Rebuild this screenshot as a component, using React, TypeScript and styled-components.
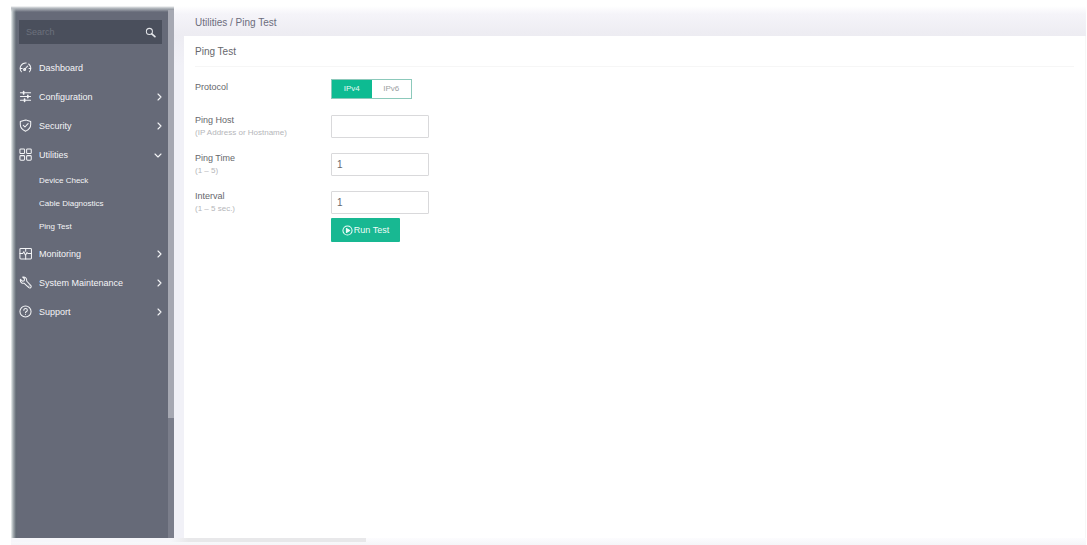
import React, { useState } from "react";
import styled, { createGlobalStyle } from "styled-components";

const GlobalStyle = createGlobalStyle`
  * { box-sizing: border-box; }
  body { margin: 0; background: #fff; font-family: "Liberation Sans", Arial, sans-serif; font-size: 10px; line-height: 14px; color: #66676c; }
  button, input { font: inherit; color: inherit; }
`;

const Page = styled.div`
  min-height: 100vh;
  display: flex;
  flex-direction: column;
  padding: 6px 1px 0 11px;
`;

const Shell = styled.div`
  flex: 1;
  display: flex;
`;

const Sidebar = styled.aside`
  width: 163px;
  flex-shrink: 0;
  display: flex;
  background:
    linear-gradient(to bottom, #fff, #b9bec3 2px, rgba(102, 106, 120, 0) 6px),
    linear-gradient(to right, #eef3f3, #a9b1b5 2px, #636b76 5px, #666a78 8px);
`;

const SidebarBody = styled.div`
  flex: 1;
  padding: 14px 6px 0 8px;
`;

const ScrollTrack = styled.div`
  width: 6px;
  margin-top: 4px;
  background: #7b7e8b;
`;

const ScrollThumb = styled.div`
  height: 408px;
  background: #a6a8b2;
`;

const Search = styled.label`
  display: flex;
  align-items: center;
  height: 24px;
  padding: 0 6px 0 7px;
  background: #4a4f5c;
  color: #e4e6ea;
`;

const SearchInput = styled.input`
  flex: 1;
  min-width: 0;
  padding: 0;
  border: 0;
  outline: 0;
  background: transparent;
  font-size: 9px;
  &::placeholder { color: #6c717d; opacity: 1; }
`;

const Menu = styled.ul`
  list-style: none;
  margin: 9px 0 0;
  padding: 0;
`;

const MenuButton = styled.button`
  display: flex;
  align-items: center;
  width: 100%;
  height: 29px;
  padding: 0;
  border: 0;
  background: transparent;
  color: #f4f5f7;
  font-size: 9px;
  text-align: left;
  cursor: pointer;
`;

const MenuText = styled.span`
  flex: 1;
  padding-left: 7px;
`;

const SubMenu = styled.ul`
  list-style: none;
  margin: 0;
  padding: 0 0 1px 20px;
`;

const SubLink = styled.a`
  display: block;
  color: #f4f5f7;
  font-size: 8px;
  line-height: 23px;
  text-decoration: none;
`;

const Icon = styled.svg<{ $size: number }>`
  width: ${(p) => p.$size}px;
  height: ${(p) => p.$size}px;
  flex-shrink: 0;
  fill: none;
  stroke: currentColor;
  stroke-width: 1.1;
  stroke-linecap: round;
  stroke-linejoin: round;
`;

const Main = styled.main`
  flex: 1;
  min-width: 0;
  display: flex;
  flex-direction: column;
  padding-left: 10px;
  background: linear-gradient(to bottom, #fff, #f5f4f9 8px, #edecf2 29px, #f1f1f7 60px);
`;

const Breadcrumb = styled.nav`
  height: 30px;
  padding: 10px 11px 0;
  color: #6c6d7c;
`;

const Crumb = styled.a`
  color: inherit;
  text-decoration: none;
`;

const Card = styled.section`
  flex: 1;
  background: #fff;
  border-right: 1px solid #f7f7f7;
`;

const CardTitle = styled.h1`
  margin: 0 11px;
  height: 31px;
  border-bottom: 1px solid #f6f6f6;
  font-size: 10px;
  font-weight: 400;
  line-height: 31px;
`;

const Form = styled.form`
  padding: 12px 11px;
  font-size: 9px;
`;

const Row = styled.div`
  display: grid;
  grid-template-columns: 136px 98px;
  align-items: start;
  height: 38px;
`;

const ProtocolRow = styled(Row)`
  height: 36px;
`;

const ProtocolLabel = styled.div`
  line-height: 16px;
`;

const Label = styled.label`
  display: block;
  line-height: 10px;
`;

const Hint = styled.small`
  display: block;
  margin-top: 3px;
  color: #b5b6ba;
  font-size: 8px;
  line-height: 10px;
  white-space: nowrap;
`;

const Field = styled.input`
  width: 98px;
  height: 23px;
  padding: 0 5px;
  border: 1px solid #d9d9db;
  border-radius: 1px;
  background: #fff;
  font-size: 10px;
`;

const Toggle = styled.div`
  display: flex;
  width: 81px;
  height: 20px;
  border: 1px solid #8cc9bb;
`;

const ToggleButton = styled.button<{ $on: boolean }>`
  flex: 1;
  padding: 0;
  border: 0;
  background: ${(p) => (p.$on ? "#0dbb92" : "#fff")};
  color: ${(p) => (p.$on ? "#e4faf4" : "#9c9fa2")};
  font-size: 8px;
`;

const RunButton = styled.button`
  display: flex;
  align-items: center;
  justify-content: center;
  gap: 1px;
  width: 69px;
  height: 24px;
  margin: -11px 0 0 136px;
  padding: 0;
  border: 0;
  border-radius: 1px;
  background: #18b892;
  color: #effcf8;
`;

const Footer = styled.footer`
  height: 7px;
  background: linear-gradient(to bottom, #fcfcfe, #f5f5f8);
`;

const FooterBar = styled.div`
  width: 33%;
  height: 4px;
  background: linear-gradient(to right, #f6f6fa 45%, #e8e8ea 50%);
`;

const icons: Record<string, React.ReactNode> = {
  Dashboard: <><path d="M2.6 11.6A5.8 5.8 0 0 1 7.8 2.2M10.4 3.2a5.8 5.8 0 0 1 .9 8.4M1.6 8h1.8M10.8 8h1.6" /><path d="m6 9 3.4-3.6" /><circle cx="6" cy="9.2" r="1.1" /></>,
  Configuration: <><path d="M1.5 3h11M1.5 7h11M1.5 11h11" /><path d="M5 1.8v2.4M9.5 5.8v2.4M6 9.8v2.4" strokeWidth="1.8" /></>,
  Security: <><path d="M7 1 12.6 2.6V6c0 3.4-2.4 5.8-5.6 7.2C3.8 11.8 1.4 9.4 1.4 6V2.6Z" /><path d="m4.6 6.8 1.8 1.8L9.8 5" /></>,
  Utilities: <><rect x="1" y="1" width="5" height="5" rx="1" /><rect x="8.2" y="1" width="5" height="5" rx="1" /><rect x="1" y="8.2" width="5" height="5" rx="1" /><rect x="8.2" y="8.2" width="5" height="5" rx="1" /></>,
  Monitoring: <><rect x="1" y="1.5" width="12.4" height="11.4" rx="1" /><path d="M7.2 1.5v3M7.2 9v4M1 7h3l1.2-2L7 9l1.6-3 1 1h3.6" /></>,
  "System Maintenance": <path d="M1.6 3.6 3.6 5.6 5.6 5 6 3.2 4 1.2C6.4.6 8.8 2.6 8.2 5.4l4.6 5c1 1.4-.8 3.2-2.2 2.2L5.4 7.8C3 8.4.8 6 1.6 3.6ZM10.8 10.8h.1" />,
  Support: <><circle cx="7" cy="7" r="6" /><path d="M5.2 5.6c0-2.6 3.8-2.4 3.8 0 0 1.4-2 1.4-2 2.8M7 10.2v.1" /></>,
};

const entries = ["Dashboard", "Configuration", "Security", "Utilities", "Monitoring", "System Maintenance", "Support"];
const utilities = ["Device Check", "Cable Diagnostics", "Ping Test"];

const fields = [
  { id: "host", label: "Ping Host", hint: "(IP Address or Hostname)", value: "" },
  { id: "time", label: "Ping Time", hint: "(1 – 5)", value: "1" },
  { id: "interval", label: "Interval", hint: "(1 – 5 sec.)", value: "1" },
];

export default function App() {
  const [protocol, setProtocol] = useState("IPv4");
  const [open, setOpen] = useState(true);

  return (
    <>
      <GlobalStyle />
      <Page>
        <Shell>
          <Sidebar>
            <SidebarBody>
              <Search>
                <SearchInput placeholder="Search" aria-label="Search" />
                <Icon $size={11} viewBox="0 0 12 12"><circle cx="4.8" cy="4.8" r="3.3" /><path d="m7.4 7.4 3.4 3.2" strokeWidth="1.8" /></Icon>
              </Search>
              <Menu>
                {entries.map((name) => (
                  <li key={name}>
                    <MenuButton type="button" onClick={() => name === "Utilities" && setOpen(!open)}>
                      <Icon $size={13} viewBox="0 0 14 14">{icons[name]}</Icon>
                      <MenuText>{name}</MenuText>
                      {name !== "Dashboard" && (
                        <Icon $size={8} viewBox="0 0 8 8">
                          <path d={name === "Utilities" && open ? "m1 3 3 3 3-3" : "m4 1 3 3-3 3"} />
                        </Icon>
                      )}
                    </MenuButton>
                    {name === "Utilities" && open && (
                      <SubMenu>
                        {utilities.map((item) => (
                          <li key={item}><SubLink href="#">{item}</SubLink></li>
                        ))}
                      </SubMenu>
                    )}
                  </li>
                ))}
              </Menu>
            </SidebarBody>
            <ScrollTrack><ScrollThumb /></ScrollTrack>
          </Sidebar>
          <Main>
            <Breadcrumb><Crumb href="#">Utilities</Crumb> / Ping Test</Breadcrumb>
            <Card>
              <CardTitle>Ping Test</CardTitle>
              <Form onSubmit={(e) => e.preventDefault()}>
                <ProtocolRow>
                  <ProtocolLabel id="protocol">Protocol</ProtocolLabel>
                  <Toggle role="group" aria-labelledby="protocol">
                    {["IPv4", "IPv6"].map((p) => (
                      <ToggleButton key={p} type="button" $on={p === protocol} onClick={() => setProtocol(p)}>{p}</ToggleButton>
                    ))}
                  </Toggle>
                </ProtocolRow>
                {fields.map((f) => (
                  <Row key={f.id}>
                    <div>
                      <Label htmlFor={f.id}>{f.label}</Label>
                      <Hint>{f.hint}</Hint>
                    </div>
                    <Field id={f.id} defaultValue={f.value} />
                  </Row>
                ))}
                <RunButton type="submit">
                  <Icon $size={11} viewBox="0 0 12 12"><circle cx="6" cy="6" r="5" /><path d="M4.8 3.8v4.4L8.4 6Z" fill="currentColor" /></Icon>
                  Run Test
                </RunButton>
              </Form>
            </Card>
          </Main>
        </Shell>
        <Footer><FooterBar /></Footer>
      </Page>
    </>
  );
}
